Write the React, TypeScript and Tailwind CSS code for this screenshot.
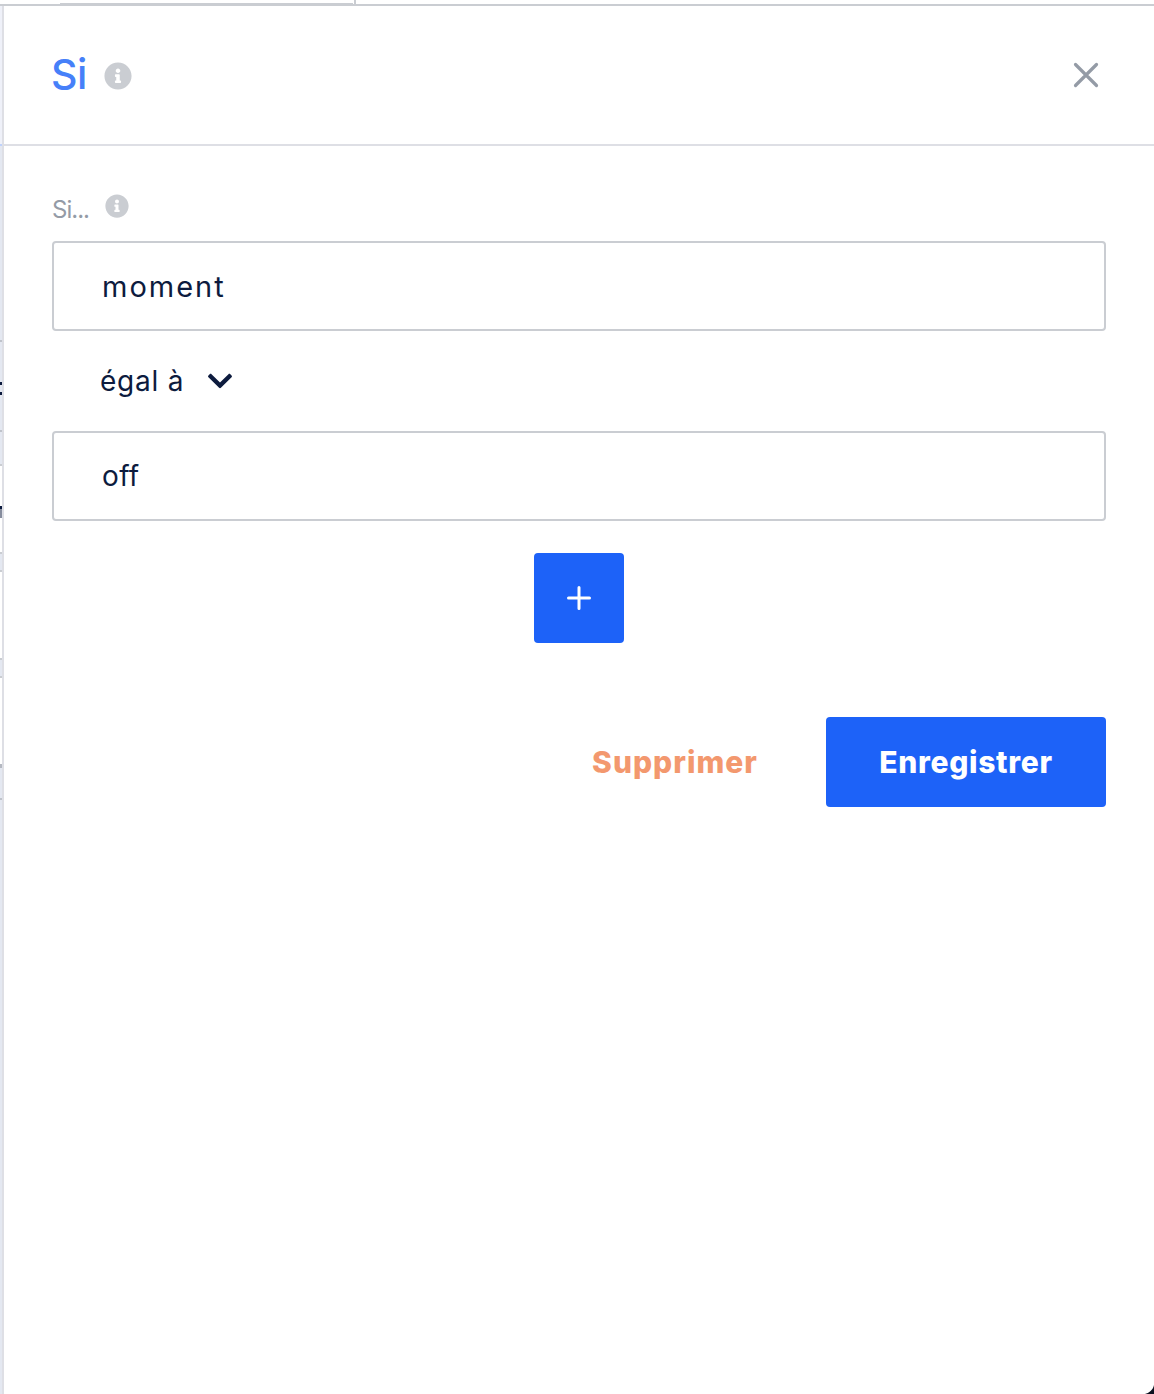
import { useState } from "react";
import { FaChevronDown, FaInfoCircle } from "react-icons/fa";

// Slice of the workflow canvas that stays visible on the left of the drawer
const canvasSlices = [
  "h-[138px] bg-[#eff1f9]",
  "h-[2px] bg-[#bfd2fb]",
  "h-[194px] bg-[#e4e8f1]",
  "h-[2px] bg-[#bfc3cb]",
  "h-[40px] bg-[#e4e8f1]",
  "h-[3px] bg-[#0d1b3e]",
  "h-[7px] bg-[#e4e8f1]",
  "h-[3px] bg-[#0d1b3e]",
  "h-[35px] bg-[#e4e8f1]",
  "h-[2px] bg-[#bfc3cb]",
  "h-[32px] bg-[#e4e8f1]",
  "h-[2px] bg-[#cacdd2]",
  "h-[40px] bg-white",
  "h-[3px] bg-[#0d1b3e]",
  "h-[9px] bg-[#868d9e]",
  "h-[34px] bg-white",
  "h-[2px] bg-[#cacdd2]",
  "h-[16px] bg-[#e4e8f1]",
  "h-[2px] bg-[#cacdd2]",
  "h-[86px] bg-white",
  "h-[2px] bg-[#cacdd2]",
  "h-[16px] bg-[#e4e8f1]",
  "h-[2px] bg-[#cacdd2]",
  "h-[86px] bg-white",
  "h-[4px] bg-[#b4b8c1]",
  "h-[30px] bg-[#e4e8f1]",
  "h-[2px] bg-[#bfc3cb]",
  "flex-1 bg-[#e4e8f1]",
];

const ConditionInput: React.FC<{
  value: string;
  onChange: (value: string) => void;
  className?: string;
}> = ({ value, onChange, className }) => {
  return (
    <input
      type="text"
      value={value}
      onChange={(e) => onChange(e.target.value)}
      className={`block h-[90px] w-full rounded-[4px] border-2 border-[#cacdd2] bg-white px-12 text-[#0d1b3e] outline-none ${className}`}
    />
  );
};

const App = () => {
  const [left, setLeft] = useState("moment");
  const [right, setRight] = useState("off");

  return (
    <div className="relative flex h-[1394px] w-[1154px] flex-col overflow-hidden bg-white font-['Inter',sans-serif]">
      <div className="flex h-[6px] border-b-2 border-[#cacdd2]">
        <div className="ml-[60px] mt-[3px] h-px w-[293px] bg-[#cacdd2]"></div>
        <div className="ml-px h-1 w-[2px] bg-[#cacdd2]"></div>
      </div>
      <div className="flex flex-1">
        <div className="flex w-[2px] flex-col">
          {canvasSlices.map((slice, index) => (
            <div key={index} className={slice}></div>
          ))}
        </div>
        <div className="flex-1 border-l-2 border-[#dedfe5]">
          <div className="flex h-[140px] items-center border-b-2 border-[#dedfe5] pl-12 pr-[55px]">
            <h2 className="-ml-px w-[53px] pb-[2px] text-[41px] font-medium leading-[50px] tracking-[-0.5px] text-[#4680f9]">
              Si
            </h2>
            <FaInfoCircle className="mt-px size-[28px] text-[#cacdd2]" />
            <button className="ml-auto" aria-label="Fermer">
              <svg
                width="26"
                height="26"
                viewBox="0 0 26 26"
                fill="none"
                stroke="#949ba6"
                strokeWidth="3.2"
                strokeLinecap="round"
              >
                <path d="M2.5 2.5L23.5 23.5M23.5 2.5L2.5 23.5" />
              </svg>
            </button>
          </div>
          <div className="px-12 pt-12">
            <div className="mb-[15px] flex h-8 items-start">
              <label className="w-[53px] text-[24px] leading-8 tracking-[-1px] text-[#949ba6]">
                Si...
              </label>
              <FaInfoCircle className="size-6 text-[#cacdd2]" />
            </div>
            <ConditionInput
              value={left}
              onChange={setLeft}
              className="text-[29px] tracking-[2px]"
            />
            <button className="flex h-[100px] items-center pl-12 text-[28px] text-[#0d1b3e]">
              <span className="w-[106px] text-left tracking-[0.8px]">
                égal à
              </span>
              <FaChevronDown className="size-7" />
            </button>
            <ConditionInput
              value={right}
              onChange={setRight}
              className="text-[28px] tracking-[0.4px]"
            />
            <button
              className="mx-auto mt-8 flex size-[90px] items-center justify-center rounded-[4px] bg-[#1d62f8]"
              aria-label="Ajouter"
            >
              <svg
                width="24"
                height="24"
                viewBox="0 0 24 24"
                stroke="white"
                strokeWidth="3"
                strokeLinecap="round"
              >
                <path d="M12 1.5V22.5M1.5 12H22.5" />
              </svg>
            </button>
            <div className="mt-[74px] flex justify-end text-[30px] font-extrabold">
              <button className="mr-[16px] h-[90px] w-[270px] tracking-[1px] text-[#f3986e]">
                Supprimer
              </button>
              <button className="h-[90px] w-[280px] rounded-[4px] bg-[#1d62f8] tracking-[0.7px] text-white">
                Enregistrer
              </button>
            </div>
          </div>
        </div>
      </div>
      {/* rounded corner of the window */}
      <svg
        className="absolute bottom-0 right-0"
        width="9"
        height="9"
        viewBox="0 0 9 9"
      >
        <path d="M9 0V9H0C4 8 8 5 9 0Z" fill="#0b1220" />
      </svg>
    </div>
  );
};

export default App;
